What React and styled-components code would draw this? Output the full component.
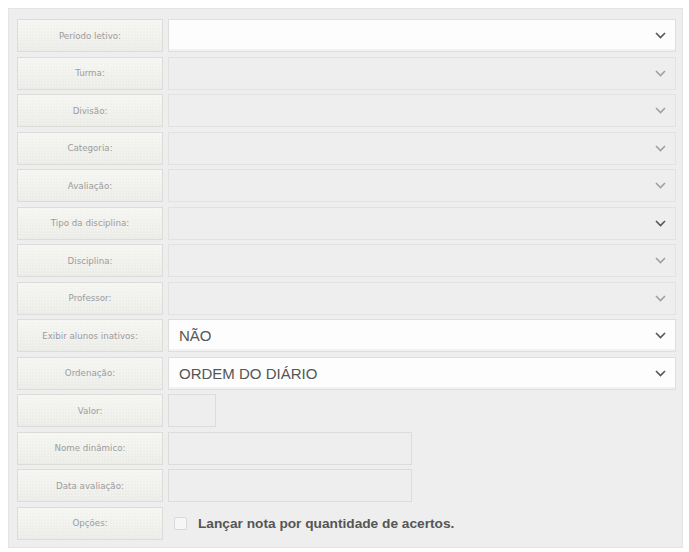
import React from 'react';
import styled, { createGlobalStyle } from 'styled-components';

const GlobalStyle = createGlobalStyle`
  body {
    margin: 0;
    background: #fff;
    font-family: "Liberation Sans", Arial, sans-serif;
  }
`;

const Panel = styled.div`
  margin: 8px 0 0 8px;
  width: 675px;
  height: 540px;
  box-sizing: border-box;
  background: #eeeeee;
  border: 1px solid #e4e4e4;
  padding: 10px 6px 0 8px;
  display: flex;
  flex-direction: column;
  gap: 4.5px;
`;

const Row = styled.div`
  display: grid;
  grid-template-columns: 146px 1fr;
  column-gap: 5px;
  height: 33px;
`;

const Label = styled.div`
  box-sizing: border-box;
  height: 33px;
  border: 1px solid #dcdcd8;
  background:
    radial-gradient(circle, rgba(255, 255, 255, 0.5) 0.6px, transparent 0.8px) 0 0 / 3px 3px,
    linear-gradient(#f5f5f1, #ebebe7);
  display: flex;
  align-items: center;
  justify-content: center;
  font-family: "DejaVu Sans", Verdana, sans-serif;
  font-size: 8.7px;
  color: #9c9c9c;
`;

const Select = styled.div`
  box-sizing: border-box;
  height: 33px;
  border: 1px solid ${p => (p.$active ? '#dedede' : '#e2e2e2')};
  background: ${p => (p.$active ? '#fdfdfd' : '#eeeeee')};
  box-shadow: ${p => (p.$active ? 'inset 0 -2px 0 #f2f2f2' : 'none')};
  display: flex;
  align-items: center;
  padding: 0 9px 0 10px;
  font-size: 15px;
  color: #555;
`;

const Value = styled.span`
  flex: 1;
`;

const Chevron = styled.svg`
  width: 11px;
  height: 7px;
  color: ${p => (p.$dark ? '#555' : '#a0a0a0')};
`;

const Input = styled.div`
  box-sizing: border-box;
  width: ${p => p.$w}px;
  height: 33px;
  border: 1px solid #dcdcdc;
  background: #eeeeee;
`;

const CheckLine = styled.label`
  display: flex;
  align-items: center;
  padding-left: 6px;
  gap: 11px;
  font-size: 13.7px;
  font-weight: bold;
  color: #555;
`;

const Box = styled.span`
  width: 13px;
  height: 13px;
  box-sizing: border-box;
  border: 1px solid #d8d8d8;
  border-radius: 2px;
  background: #f6f6f6;
`;

const Arrow = ({ dark }) => (
  <Chevron $dark={dark} viewBox="0 0 11 7" fill="none">
    <path d="M1 1l4.5 4.5L10 1" stroke="currentColor" strokeWidth="1.6" />
  </Chevron>
);

// label, white background, dark arrow, value
const selects = [
  ['Período letivo:', true, true, ''],
  ['Turma:', false, false, ''],
  ['Divisão:', false, false, ''],
  ['Categoria:', false, false, ''],
  ['Avaliação:', false, false, ''],
  ['Tipo da disciplina:', false, true, ''],
  ['Disciplina:', false, false, ''],
  ['Professor:', false, false, ''],
  ['Exibir alunos inativos:', true, true, 'NÃO'],
  ['Ordenação:', true, true, 'ORDEM DO DIÁRIO'],
];

const App = () => (
  <>
    <GlobalStyle />
    <Panel>
      {selects.map(([label, active, dark, value]) => (
        <Row key={label}>
          <Label>{label}</Label>
          <Select $active={active}>
            <Value>{value}</Value>
            <Arrow dark={dark} />
          </Select>
        </Row>
      ))}
      <Row>
        <Label>Valor:</Label>
        <Input $w={48} />
      </Row>
      <Row>
        <Label>Nome dinâmico:</Label>
        <Input $w={244} />
      </Row>
      <Row>
        <Label>Data avaliação:</Label>
        <Input $w={244} />
      </Row>
      <Row>
        <Label>Opções:</Label>
        <CheckLine>
          <Box />
          Lançar nota por quantidade de acertos.
        </CheckLine>
      </Row>
    </Panel>
  </>
);

export default App;
